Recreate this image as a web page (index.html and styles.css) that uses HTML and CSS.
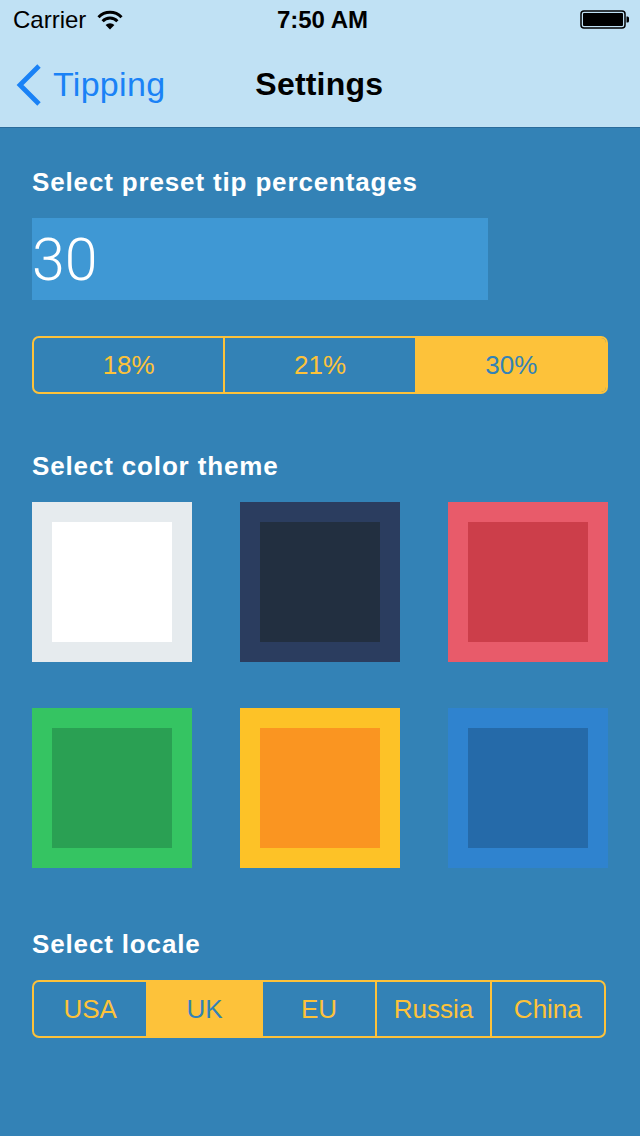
FILE: index.html
```html
<!DOCTYPE html>
<html>
<head>
<meta charset="utf-8">
<link rel="stylesheet" href="styles.css">
</head>
<body>
<div class="screen">
  <header class="top">
    <div class="status">
      <div class="status-left">
        <span class="carrier">Carrier</span>
        <svg class="wifi" width="26" height="20" viewBox="0 0 26 20">
          <path d="M1.5 7.2 A16 16 0 0 1 24.5 7.2" fill="none" stroke="#000" stroke-width="3"/>
          <path d="M5.6 11.2 A10.3 10.3 0 0 1 20.4 11.2" fill="none" stroke="#000" stroke-width="3"/>
          <path d="M13 19.5 L8.6 15 A6.2 6.2 0 0 1 17.4 15 Z" fill="#000"/>
        </svg>
      </div>
      <span class="time">7:50 AM</span>
      <div class="status-right">
        <svg class="battery" width="50" height="20" viewBox="0 0 50 20">
          <rect x="1" y="1" width="44" height="17" rx="3" fill="none" stroke="#000" stroke-width="1.5"/>
          <rect x="3" y="3" width="40" height="13" rx="1" fill="#000"/>
          <path d="M46.5 6.5 h1 a1.5 1.5 0 0 1 1.5 1.5 v3 a1.5 1.5 0 0 1 -1.5 1.5 h-1 z" fill="#000"/>
        </svg>
      </div>
    </div>
    <nav class="navbar">
      <a class="back">
        <svg class="chevron" width="28" height="42" viewBox="0 0 28 42">
          <path d="M24 2 L5 21 L24 40" fill="none" stroke="#1a82f6" stroke-width="4.8"/>
        </svg>
        <span class="back-label">Tipping</span>
      </a>
      <h1 class="title">Settings</h1>
    </nav>
  </header>

  <main class="content">
    <h2 class="section-title">Select preset tip percentages</h2>
    <div class="tip-input">30</div>
    <div class="segmented tips">
      <div class="seg">18%</div>
      <div class="seg">21%</div>
      <div class="seg active">30%</div>
    </div>

    <h2 class="section-title gap-top">Select color theme</h2>
    <div class="swatches">
      <div class="swatch s-white"><div class="inner"></div></div>
      <div class="swatch s-navy"><div class="inner"></div></div>
      <div class="swatch s-red"><div class="inner"></div></div>
      <div class="swatch s-green"><div class="inner"></div></div>
      <div class="swatch s-yellow"><div class="inner"></div></div>
      <div class="swatch s-blue"><div class="inner"></div></div>
    </div>

    <h2 class="section-title gap-top2">Select locale</h2>
    <div class="segmented locale">
      <div class="seg">USA</div>
      <div class="seg active">UK</div>
      <div class="seg">EU</div>
      <div class="seg">Russia</div>
      <div class="seg">China</div>
    </div>
  </main>
</div>
</body>
</html>
```

FILE: styles.css
```css
* { box-sizing: border-box; }
html, body {
  margin: 0;
  padding: 0;
  background: #3382b6;
}
body {
  font-family: "Liberation Sans", Arial, sans-serif;
  width: 640px;
  height: 1136px;
  overflow: hidden;
}
.screen {
  width: 640px;
  height: 1136px;
  background: #3382b6;
  display: flex;
  flex-direction: column;
}
.top {
  background: #c0e1f4;
  border-bottom: 1px solid #2a6c9c;
}
.status {
  height: 40px;
  display: flex;
  align-items: center;
  justify-content: space-between;
  padding: 0 10px 0 13px;
  color: #000;
  font-size: 24px;
}
.status-left, .status-right {
  width: 160px;
  display: flex;
  align-items: center;
}
.status-right { justify-content: flex-end; }
.carrier { margin-right: 11px; }
.wifi { margin-top: -1px; }
.time {
  font-weight: bold;
  font-size: 24px;
  margin-left: 2px;
}
.navbar {
  height: 87px;
  display: flex;
  align-items: center;
}
.back {
  display: flex;
  align-items: center;
  padding-left: 15px;
  color: #1a82f6;
  margin-top: 2px;
}
.chevron { margin-right: 10px; }
.back-label {
  font-size: 34px;
  letter-spacing: 0.3px;
}
.title {
  margin: 2px 0 0 90px;
  font-size: 32px;
  font-weight: bold;
  color: #000;
  letter-spacing: 0.2px;
}
.content {
  padding: 36px 32px 0 32px;
  display: flex;
  flex-direction: column;
}
.section-title {
  margin: 0;
  height: 36px;
  line-height: 36px;
  font-size: 26px;
  font-weight: bold;
  letter-spacing: 0.85px;
  color: #fff;
}
.gap-top { margin-top: 54px; }
.gap-top2 { margin-top: 58px; }
.tip-input {
  margin-top: 18px;
  width: 456px;
  height: 82px;
  background: #3f98d4;
  color: #fff;
  font-family: Roboto, "Liberation Sans", sans-serif;
  font-weight: 300;
  font-size: 59px;
  line-height: 84px;
}
.segmented {
  display: flex;
  height: 58px;
  border: 2px solid #fdc23a;
  border-radius: 7px;
  overflow: hidden;
  margin-top: 18px;
}
.segmented.tips {
  margin-top: 36px;
  width: 576px;
}
.segmented.locale {
  width: 574px;
}
.seg {
  flex: 1 1 0;
  display: flex;
  align-items: center;
  justify-content: center;
  color: #fdc23a;
  font-size: 26px;
  border-left: 2px solid #fdc23a;
}
.seg:first-child { border-left: none; }
.seg.active {
  background: #fdc23a;
  color: #3382b6;
}
.swatches {
  margin-top: 18px;
  display: grid;
  grid-template-columns: repeat(3, 160px);
  grid-auto-rows: 160px;
  column-gap: 48px;
  row-gap: 46px;
}
.swatch {
  padding: 20px;
}
.swatch .inner {
  width: 100%;
  height: 100%;
}
.s-white { background: #e6ebee; }
.s-white .inner { background: #ffffff; }
.s-navy { background: #2b3d5f; }
.s-navy .inner { background: #222f40; }
.s-red { background: #e85b6a; }
.s-red .inner { background: #cc3e4a; }
.s-green { background: #35c462; }
.s-green .inner { background: #2aa053; }
.s-yellow { background: #fdc227; }
.s-yellow .inner { background: #fa9521; }
.s-blue { background: #2f83cf; }
.s-blue .inner { background: #256aa9; }
```
